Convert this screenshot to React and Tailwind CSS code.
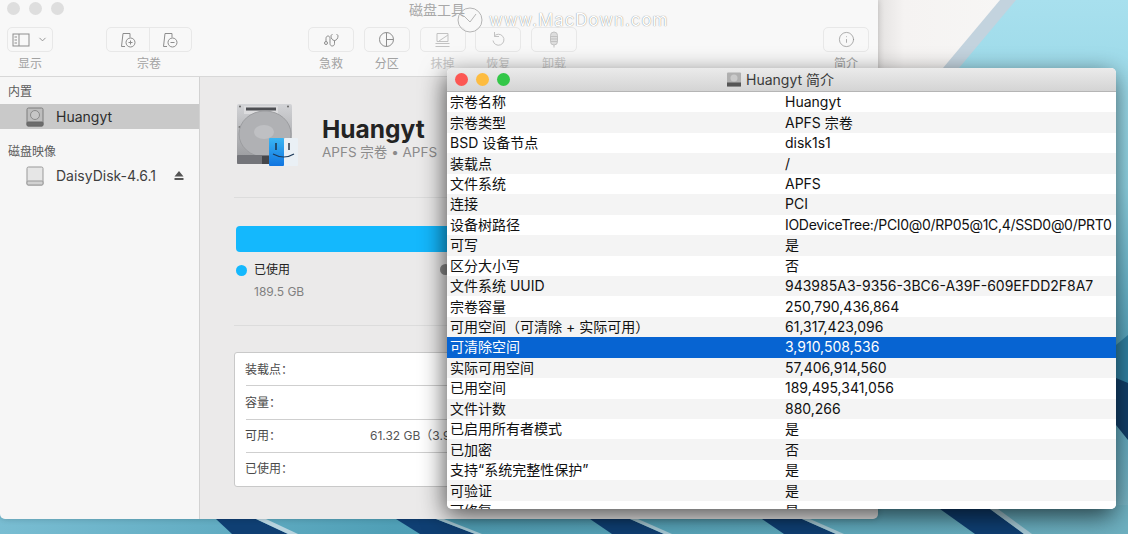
// Disk Utility window with the volume info panel on top of it
import { ChevronDown, Info } from 'lucide-react'

const CJK = "font-['Inter','Noto_Sans_CJK_SC',sans-serif]"

const rows = [
  ['宗卷名称', 'Huangyt'],
  ['宗卷类型', 'APFS 宗卷'],
  ['BSD 设备节点', 'disk1s1'],
  ['装载点', '/'],
  ['文件系统', 'APFS'],
  ['连接', 'PCI'],
  ['设备树路径', 'IODeviceTree:/PCI0@0/RP05@1C,4/SSD0@0/PRT0'],
  ['可写', '是'],
  ['区分大小写', '否'],
  ['文件系统 UUID', '943985A3-9356-3BC6-A39F-609EFDD2F8A7'],
  ['宗卷容量', '250,790,436,864'],
  ['可用空间（可清除 + 实际可用）', '61,317,423,096'],
  ['可清除空间', '3,910,508,536'],
  ['实际可用空间', '57,406,914,560'],
  ['已用空间', '189,495,341,056'],
  ['文件计数', '880,266'],
  ['已启用所有者模式', '是'],
  ['已加密', '否'],
  ['支持“系统完整性保护”', '是'],
  ['可验证', '是'],
  ['可修复', '是'],
]

function ToolButton({ children, label, w = 'w-[46px]', fade = false }) {
  return (
    <div className="flex flex-col items-center gap-[5px]">
      <div className={`h-[25px] ${w} flex items-center justify-center rounded-[5px] border border-[#e8e8e8] bg-[#f8f8f8] text-[#8d8d8d]`}>
        <div className={`flex items-center ${fade ? 'opacity-50' : ''}`}>{children}</div>
      </div>
      <span className={`text-[12px] leading-[14px] ${fade ? 'text-[#c6c6c6]' : 'text-[#a2a2a2]'}`}>{label}</span>
    </div>
  )
}

function VolumeIcon({ sign }) {
  return (
    <svg width="18" height="18" viewBox="0 0 18 18" fill="none" stroke="#8d8d8d" strokeWidth="1">
      <path d="M4 2.5h7v4M6 15.5H2.5l1.5-13" />
      <circle cx="11.5" cy="11.5" r="4.5" />
      <path d="M9.5 11.5h4" />
      {sign === 'plus' && <path d="M11.5 9.5v4" />}
    </svg>
  )
}

function SmallDrive({ light }) {
  return (
    <svg width="20" height="20" viewBox="0 0 20 20">
      <rect x="2" y="1" width="16" height="18" rx="1.5" fill={light ? '#e6e6e6' : '#bdbdbd'} stroke={light ? '#999' : '#7d7d7d'} />
      <rect x="2" y="15" width="16" height="4" rx="1" fill={light ? '#d2d2d2' : '#6c6c6c'} stroke={light ? '#999' : '#666'} />
      {!light && <circle cx="10" cy="8" r="4.5" fill="#c6c6c6" stroke="#8a8a8a" />}
    </svg>
  )
}

function BigDrive() {
  return (
    <svg width="64" height="64" viewBox="0 0 64 64">
      <defs>
        <linearGradient id="hd" x1="0" y1="0" x2="0" y2="1">
          <stop offset="0" stopColor="#d2d3d6" />
          <stop offset="1" stopColor="#96979a" />
        </linearGradient>
        <linearGradient id="fl" x1="0" y1="0" x2="0" y2="1">
          <stop offset="0" stopColor="#39b5f3" />
          <stop offset="1" stopColor="#1175e0" />
        </linearGradient>
      </defs>
      <rect x="1" y="1" width="55" height="60" rx="2" fill="url(#hd)" />
      <rect x="8" y="3" width="34" height="8" fill="#dcdcde" />
      <rect x="10" y="4.5" width="30" height="3" fill="#4d4e52" />
      <circle cx="4" cy="3.5" r="1" fill="#666" />
      <circle cx="52" cy="3.5" r="1" fill="#666" />
      <circle cx="3.5" cy="24" r="1" fill="#777" />
      <ellipse cx="29" cy="31" rx="26" ry="23" fill="#b0b1b4" stroke="#9c9da0" />
      <ellipse cx="28" cy="29" rx="10" ry="7" fill="#bfc0c3" />
      <rect x="1" y="52" width="34" height="9" rx="1" fill="#74757a" />
      <rect x="26" y="53" width="8" height="8" fill="#45464a" />
      <rect x="33" y="35" width="15" height="28" rx="1" fill="url(#fl)" />
      <rect x="48" y="35" width="14" height="28" rx="1" fill="#eaf0f5" />
      <path d="M40 40v7M53 40v7" stroke="#1d2a3a" strokeWidth="1.4" />
      <path d="M37 51q11 6 21 0" stroke="#1d3a5a" strokeWidth="1.2" fill="none" />
    </svg>
  )
}

function InfoRow({ label, value, last }) {
  return (
    <div className="relative flex h-[33.25px] items-center pl-[10px] text-[12px] text-[#4a4a4a]">
      <span>{label}</span>
      {value && <span className="absolute left-[135px] whitespace-nowrap text-[#555]">{value}</span>}
      {!last && <div className="absolute bottom-0 left-[11px] right-0 h-px bg-[#cfcfcf]" />}
    </div>
  )
}

function Wallpaper() {
  return (
    <svg className="absolute inset-0" width="1128" height="534" viewBox="0 0 1128 534">
      <defs>
        <linearGradient id="sea" x1="0" y1="0" x2="0" y2="1">
          <stop offset="0" stopColor="#a8e0ee" />
          <stop offset="0.35" stopColor="#8ed2e2" />
          <stop offset="0.68" stopColor="#4f9db6" />
          <stop offset="1" stopColor="#7fb8c6" />
        </linearGradient>
        <linearGradient id="deep" x1="0" y1="0" x2="1" y2="0">
          <stop offset="0" stopColor="#79bdd2" />
          <stop offset="0.35" stopColor="#4f9fb6" />
          <stop offset="0.7" stopColor="#5da9bd" />
          <stop offset="1" stopColor="#6eb0c0" />
        </linearGradient>
        <linearGradient id="paper" x1="0" y1="0" x2="1" y2="0">
          <stop offset="0" stopColor="#e4e2e1" />
          <stop offset="0.2" stopColor="#f5f3f2" />
          <stop offset="1" stopColor="#f7f6f5" />
        </linearGradient>
      </defs>
      <rect width="1128" height="534" fill="url(#sea)" />
      <polygon points="878,0 1008,0 945,68 878,68" fill="url(#paper)" />
      <polygon points="1000,0 1016,0 959,68 943,68" fill="#c3d3de" />
      <polygon points="1116,345 1128,335 1128,385 1116,395" fill="#2f7fa0" />
      <polygon points="1116,378 1128,383 1128,440 1116,425" fill="#123f68" />
      <rect y="505" width="1128" height="29" fill="url(#deep)" />
      <polygon points="216,519 256,519 288,534 232,534" fill="#0f3f73" />
      <polygon points="256,519 266,519 298,534 288,534" fill="#b8d4df" />
      <polygon points="396,519 436,519 475,534 420,534" fill="#0f3f73" />
      <polygon points="436,519 444,519 482,534 475,534" fill="#a8cad6" />
      <polygon points="590,519 630,519 664,534 612,534" fill="#0f3f73" />
      <polygon points="630,519 638,519 672,534 664,534" fill="#a8cad6" />
      <polygon points="762,519 802,519 836,534 784,534" fill="#0f3f73" />
      <polygon points="802,519 810,519 844,534 836,534" fill="#a8cad6" />
      <polygon points="940,509 990,509 1024,534 975,534" fill="#0f3f73" />
      <polygon points="990,509 998,509 1032,534 1024,534" fill="#a8cad6" />
    </svg>
  )
}

export default function App() {
  return (
    <div className={`relative h-[534px] w-[1128px] overflow-hidden ${CJK}`}>
      <Wallpaper />

      {/* Main window */}
      <div className="absolute left-0 top-0 flex h-[519px] w-[878px] flex-col overflow-hidden rounded-b-[5px] shadow-[0_0_6px_rgba(0,0,0,0.2)]">
        {/* Toolbar */}
        <header className="relative h-[77px] shrink-0 border-b border-[#d8d8d8] bg-[#f8f8f8]">
          <div className="flex gap-[9px] pl-[7px] pt-[2px]">
            <span className="h-[13px] w-[13px] rounded-full bg-[#dedede]" />
            <span className="h-[13px] w-[13px] rounded-full bg-[#dedede]" />
            <span className="h-[13px] w-[13px] rounded-full bg-[#dedede]" />
          </div>
          <p className="absolute left-[409px] top-[1px] text-[14px] leading-[18px] text-[#a8a8a8]">磁盘工具</p>
          <div className="absolute left-[7px] right-[9px] top-[27px] flex items-start">
            <ToolButton label="显示">
              <svg width="18" height="14" viewBox="0 0 18 14" fill="none" stroke="#8d8d8d">
                <rect x="1" y="1" width="16" height="12" />
                <path d="M7 1v12M2.5 4H5M2.5 7H5M2.5 10H5" />
              </svg>
              <ChevronDown size={11} className="ml-[7px]" />
            </ToolButton>
            <div className="ml-[53px]">
              <div className="flex flex-col items-center gap-[5px]">
                <div className="flex h-[25px] w-[86px] rounded-[5px] border border-[#e8e8e8] bg-[#f8f8f8]">
                  <div className="flex flex-1 items-center justify-center border-r border-[#e8e8e8]"><VolumeIcon sign="plus" /></div>
                  <div className="flex flex-1 items-center justify-center"><VolumeIcon /></div>
                </div>
                <span className="text-[12px] leading-[14px] text-[#a2a2a2]">宗卷</span>
              </div>
            </div>
            <div className="ml-[116px] flex gap-[9.75px]">
              <ToolButton label="急救">
                <svg width="18" height="16" viewBox="0 0 18 16" fill="none" stroke="#8d8d8d">
                  <path d="M10.5 2.5c-1 0-1.5.7-1.5 1.6 0 2 1.2 4.4 3.5 4.4S16 6 16 4.1c0-.9-.5-1.6-1.5-1.6M12.5 8.5v3.2c0 1.5-1 2.3-2.3 2.3S8 13 8 11.5V6.5C8 5 7.2 4 6 4S4 5 4 6.5v3" />
                  <circle cx="4" cy="11" r="1.5" />
                </svg>
              </ToolButton>
              <ToolButton label="分区">
                <svg width="17" height="17" viewBox="0 0 17 17" fill="none" stroke="#8d8d8d">
                  <circle cx="8.5" cy="8.5" r="7" />
                  <path d="M8.5 1.5v14M8.5 8.5h7" />
                </svg>
              </ToolButton>
              <ToolButton label="抹掉" fade>
                <svg width="18" height="16" viewBox="0 0 18 16" fill="none" stroke="#8d8d8d">
                  <path d="M3 1.5h11v8H3zM1.5 11.5h14M1.5 14.5h14M5 9l9-6" />
                </svg>
              </ToolButton>
              <ToolButton label="恢复" fade>
                <svg width="14" height="17" viewBox="0 0 14 17" fill="none" stroke="#8d8d8d">
                  <path d="M3 5.5a5.5 5.5 0 1 1-1 4M3.5 1v4.5H8" />
                </svg>
              </ToolButton>
              <ToolButton label="卸载" fade>
                <svg width="12" height="17" viewBox="0 0 12 17" fill="none" stroke="#8d8d8d">
                  <rect x="2.5" y="1" width="7" height="13" rx="3.5" fill="#c4c4c4" />
                  <path d="M2.5 5.5h7M2.5 8h7M2.5 10.5h7M6 14v2.5" />
                </svg>
              </ToolButton>
            </div>
            <div className="ml-auto">
              <ToolButton label="简介"><Info size={17} strokeWidth={1} /></ToolButton>
            </div>
          </div>
        </header>

        <div className="flex min-h-0 flex-1">
          {/* Sidebar */}
          <aside className="w-[200px] shrink-0 border-r border-[#d2d2d2] bg-[#f6f6f6] pt-[7px]">
            <p className="pl-[8px] text-[12px] leading-[16px] text-[#5b5b5b]">内置</p>
            <div className="mt-[4px] flex h-[25px] items-center gap-[11px] bg-[#c9c9c9] pl-[25px] text-[14px] text-[#2d2d2d]">
              <SmallDrive />
              <span>Huangyt</span>
            </div>
            <p className="mt-[15px] pl-[8px] text-[12px] leading-[16px] text-[#5b5b5b]">磁盘映像</p>
            <div className="mt-[3px] flex h-[25px] items-center gap-[11px] pl-[25px] text-[14px] text-[#3f3f3f]">
              <SmallDrive light />
              <span>DaisyDisk-4.6.1</span>
              <svg className="ml-[7px]" width="10" height="9" viewBox="0 0 10 9" fill="#555"><path d="M5 0l4.5 5.5h-9zM.5 7h9v2h-9z" /></svg>
            </div>
          </aside>

          {/* Volume details */}
          <main className="min-w-0 flex-1 bg-[#ebeaea] pl-[34px] pr-[34px] pt-[26px]">
            <div className="flex h-[64px] items-center gap-[20px] pl-[4px]">
              <div className="-ml-[2px]"><BigDrive /></div>
              <div className="pt-[5px]">
                <h1 className="ml-[2px] text-[24.5px] font-bold leading-[28px] text-[#232323]">Huangyt</h1>
                <p className="ml-[2px] mt-[1px] text-[13.5px] leading-[17px] text-[#8b8b8b]">APFS 宗卷 • APFS</p>
              </div>
            </div>
            <div className="mt-[30px] h-px bg-[#dcdcdc]" />
            <div className="mx-[2px] mt-[28px] h-[26px] rounded-[4px] bg-[#14b8fd]" />
            <div className="relative mt-[10px] pl-[2px]">
              <div className="flex items-center gap-[7px]">
                <span className="h-[11px] w-[11px] rounded-full bg-[#14b8fd]" />
                <span className="text-[12px] leading-[16px] text-[#222]">已使用</span>
              </div>
              <p className="mt-[6px] pl-[18px] text-[12px] leading-[16px] text-[#808080]">189.5 GB</p>
              <span className="absolute left-[206px] top-[2px] h-[11px] w-[11px] rounded-full bg-[#8c8c8c]" />
            </div>
            <div className="mt-[25px] h-px bg-[#dcdcdc]" />
            <div className="mt-[26px] overflow-hidden rounded-[3px] border border-[#c9c9c9] bg-white">
              <InfoRow label="装载点：" />
              <InfoRow label="容量：" />
              <InfoRow label="可用：" value="61.32 GB（3.91 GB 可清除）" />
              <InfoRow label="已使用：" last />
            </div>
          </main>
        </div>
      </div>

      {/* Info panel */}
      <section className="absolute left-[447px] top-[68px] flex h-[441px] w-[669px] flex-col overflow-hidden rounded-[5px] bg-white shadow-[-2px_7px_24px_rgba(0,0,0,0.65)]">
        <div className="relative flex h-[24px] shrink-0 items-center justify-center border-b border-[#b5b5b5] bg-gradient-to-b from-[#ebebeb] to-[#d4d4d4]">
          <div className="absolute left-[8px] top-[5px] flex gap-[8px]">
            <span className="h-[13px] w-[13px] rounded-full bg-[#fc5753]" />
            <span className="h-[13px] w-[13px] rounded-full bg-[#fdbc40]" />
            <span className="h-[13px] w-[13px] rounded-full bg-[#33c748]" />
          </div>
          <div className="-ml-[3px] flex items-center gap-[4px] text-[14px] text-[#3a3a3a]">
            <svg width="16" height="15" viewBox="0 0 16 15">
              <rect x="1" y="0.5" width="14" height="14" rx="1" fill="#b0b0b0" />
              <rect x="1" y="10.5" width="14" height="4" fill="#555" />
              <circle cx="8" cy="6" r="3.5" fill="#cacaca" />
            </svg>
            <span>Huangyt 简介</span>
          </div>
        </div>
        <div className="min-h-0 flex-1 overflow-hidden">
          {rows.map(([k, v], i) => (
            <div
              key={k}
              className={`flex h-[20.44px] items-center pl-[3px] text-[14px] leading-[20px] ${
                i === 12 ? 'bg-[#0764d2] text-white' : i % 2 ? 'bg-[#f4f4f4] text-[#111]' : 'bg-white text-[#111]'
              }`}
            >
              <span className="w-[335px] shrink-0 whitespace-nowrap">{k}</span>
              <span className={`whitespace-nowrap ${i === 6 ? 'tracking-[-0.3px]' : ''}`}>{v}</span>
            </div>
          ))}
        </div>
      </section>

      {/* Watermark */}
      <div className="absolute left-[457px] top-[7px] flex items-center gap-[6px] text-[17px] leading-[24px] tracking-[0.9px] text-white [text-shadow:0_0_1px_rgba(90,90,90,0.9)]">
        <svg width="26" height="26" viewBox="0 0 26 26" fill="none" stroke="#b5b5b5">
          <circle cx="13" cy="13" r="12" />
          <path d="M7 9l6 6 6-8" />
        </svg>
        <span>www.MacDown.com</span>
      </div>
    </div>
  )
}
